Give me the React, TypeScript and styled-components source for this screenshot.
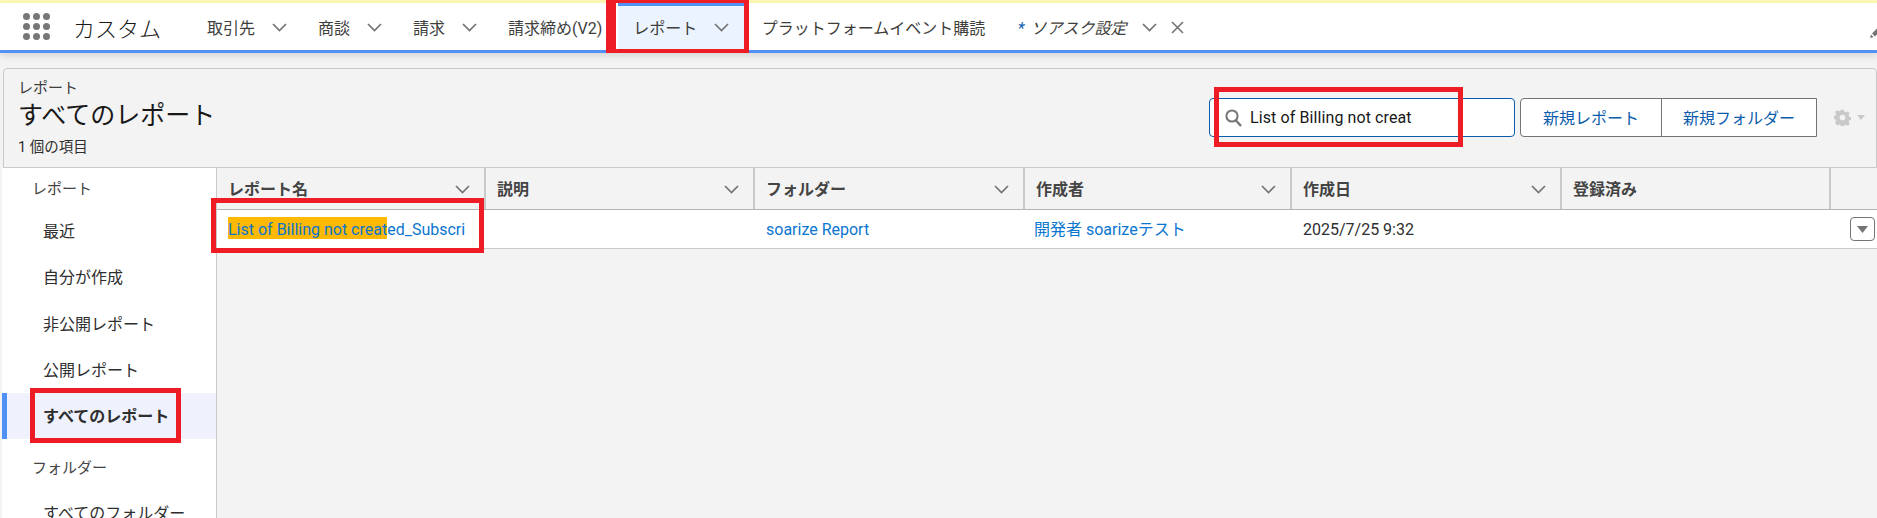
import React from 'react';
import styled, { createGlobalStyle } from 'styled-components';

const GlobalStyle = createGlobalStyle`
    html, body {
        margin: 0;
        padding: 0;
        background: #f3f3f3;
    }
    body {
        font-family: Roboto, "Noto Sans CJK JP", sans-serif;
        color: #2e2e2e;
    }
`

const Page = styled.div`
    position: relative;
    width: 1877px;
    height: 518px;
    overflow: hidden;
    background: #f3f3f3;
`

const Banner = styled.div`
    height: 3px;
    background: #fdf8b4;
`

const Nav = styled.nav`
    position: relative;
    display: flex;
    align-items: stretch;
    height: 47px;
    padding-left: 23px;
    background: #fff;
    border-bottom: 3px solid #5191f5;
    box-shadow: 0 3px 7px rgba(0, 0, 0, 0.12);
`

const Launcher = styled.div`
    display: grid;
    grid-template-columns: repeat(3, 7px);
    grid-auto-rows: 7px;
    gap: 3px;
    align-self: center;
    margin-right: 23px;
`

const Dot = styled.span`
    border-radius: 50%;
    background: #777;
`

const AppName = styled.div`
    display: flex;
    align-items: center;
    width: 118.5px;
    font-size: 22px;
    font-weight: 300;
    color: #181818;
`

const Tab = styled.div<{ $active?: boolean; $gap?: number; $extraLeft?: number }>`
    display: flex;
    align-items: center;
    gap: ${p => p.$gap ?? 17}px;
    height: 100%;
    padding: 0 15.5px 2px ${p => 15.5 + (p.$extraLeft ?? 0)}px;
    box-sizing: border-box;
    font-size: 16px;
    color: #3e3e3c;
    background: ${p => (p.$active ? '#ebf3fe' : 'transparent')};
    border-top: 3px solid ${p => (p.$active ? '#5191f5' : 'transparent')};
    white-space: nowrap;
`

const ItalicLabel = styled.span`
    font-style: italic;
`

const Star = styled.span`
    margin-right: 6px;
    color: #0b5cab;
`

const PencilIcon = styled.svg`
    margin-left: auto;
    align-self: center;
    margin-top: 11px;
    margin-right: -5px;
`

const Content = styled.div`
    padding: 15px 0 0 2px;
`

const Header = styled.header`
    display: flex;
    justify-content: space-between;
    height: 100px;
    box-sizing: border-box;
    padding: 0 11px 0 14px;
    margin-left: 1px;
    border: 1px solid #c9c9c9;
    border-radius: 4px 4px 0 0;
`

const TitleBlock = styled.div`
    display: flex;
    flex-direction: column;
`

const Eyebrow = styled.div`
    margin-top: 9px;
    font-size: 15px;
    line-height: 20px;
    color: #3e3e3c;
`

const Title = styled.h1`
    margin: 1px 0 0;
    font-size: 25px;
    line-height: 34px;
    font-weight: 400;
    color: #181818;
`

const ItemCount = styled.div`
    margin-top: 5px;
    font-size: 14.5px;
    line-height: 20px;
`

const Actions = styled.div`
    display: flex;
    align-items: center;
    margin-top: -1px;
`

const SearchBox = styled.div`
    display: flex;
    align-items: center;
    gap: 8px;
    width: 306px;
    height: 39px;
    box-sizing: border-box;
    padding-left: 15px;
    margin-right: 5px;
    background: #fff;
    border: 1px solid #0b5cab;
    border-radius: 4px;
    font-size: 16px;
    letter-spacing: 0.1px;
    color: #181818;
`

const ButtonGroup = styled.div`
    display: flex;
    height: 39px;
    box-sizing: border-box;
    background: #fff;
    border: 1px solid #747474;
    border-radius: 4px 0 0 4px;
`

const GroupButton = styled.div<{ $width: number; $divided?: boolean }>`
    display: flex;
    align-items: center;
    justify-content: center;
    width: ${p => p.$width}px;
    padding-bottom: 2px;
    box-sizing: content-box;
    font-size: 16px;
    color: #0b5cab;
    border-left: ${p => (p.$divided ? '1px solid #747474' : 'none')};
`

const GearMenu = styled.div`
    display: flex;
    align-items: center;
    gap: 6px;
    margin-left: 17px;
`

const Body = styled.div`
    display: flex;
    height: 350px;
`

const Sidebar = styled.aside`
    width: 214px;
    flex: none;
    background: #fff;
    border-right: 1px solid #c9c9c9;
`

const SideHeading = styled.div<{ $height: number; $pushDown?: number }>`
    display: flex;
    align-items: center;
    height: ${p => p.$height}px;
    box-sizing: border-box;
    padding: ${p => p.$pushDown ?? 0}px 0 2px 30px;
    font-size: 15px;
    color: #444;
`

const SideItem = styled.div<{ $active?: boolean }>`
    display: flex;
    align-items: center;
    height: 46.3px;
    box-sizing: border-box;
    padding: 0 0 2px ${p => (p.$active ? '36px' : '41px')};
    font-size: 16px;
    font-weight: ${p => (p.$active ? 700 : 400)};
    color: #2e2e2e;
    background: ${p => (p.$active ? '#eff2fc' : 'transparent')};
    border-left: ${p => (p.$active ? '5px solid #5191f5' : 'none')};
    white-space: nowrap;
`

const Main = styled.main`
    flex: 1;
    min-width: 0;
`

const ColumnRow = styled.div`
    display: flex;
    height: 41px;
    border-bottom: 1px solid #b4b4b4;
`

const ColumnHead = styled.div<{ $width: number }>`
    display: flex;
    align-items: center;
    justify-content: space-between;
    flex: none;
    width: ${p => p.$width}px;
    box-sizing: border-box;
    padding: 0 14px 2px 11px;
    border-right: 2px solid #c9c9c9;
    font-size: 16px;
    font-weight: 700;
    color: #444;

    svg {
        margin-top: 4px;
    }
`

const DataRow = styled.div`
    display: flex;
    position: relative;
    height: 38px;
    align-items: center;
    background: #fff;
    border-bottom: 1px solid #c9c9c9;
`

const Cell = styled.div<{ $width: number; $indent?: number }>`
    flex: none;
    width: ${p => p.$width}px;
    box-sizing: border-box;
    padding: 2px 0 0 ${p => p.$indent ?? 11}px;
    font-size: 16px;
    line-height: 22px;
    white-space: nowrap;
    overflow: hidden;
`

const CellLink = styled.a`
    color: #0b76d0;
    text-decoration: none;
`

const Highlight = styled.mark`
    padding: 3px 0 0;
    background: #ffb900;
    color: #0b76d0;
`

const RowAction = styled.button`
    display: flex;
    align-items: center;
    justify-content: center;
    width: 25px;
    height: 24px;
    margin-left: 20px;
    padding: 0;
    background: #fff;
    border: 1px solid #747474;
    border-radius: 4px;
`

const RedBox = styled.div<{ $top: number; $left: number; $width: number; $height: number; $sides?: string }>`
    position: absolute;
    top: ${p => p.$top}px;
    left: ${p => p.$left}px;
    width: ${p => p.$width}px;
    height: ${p => p.$height}px;
    box-sizing: border-box;
    border: solid #ee1c25;
    border-width: ${p => p.$sides ?? '5px'};
    pointer-events: none;
`

const Chevron = () => (
    <svg width="15" height="9" viewBox="0 0 15 9" fill="none" style={{ flex: 'none' }}>
        <path d="M1 1l6.5 6.5L14 1" stroke="#747474" strokeWidth="1.7" />
    </svg>
)

const columns = [
    { name: 'レポート名', width: 269, sortable: true },
    { name: '説明', width: 269, sortable: true },
    { name: 'フォルダー', width: 270, sortable: true },
    { name: '作成者', width: 267, sortable: true },
    { name: '作成日', width: 270, sortable: true },
    { name: '登録済み', width: 269, sortable: false },
]

const tabs = [
    { label: '取引先', arrow: true },
    { label: '商談', arrow: true },
    { label: '請求', arrow: true },
    { label: '請求締め(V2)', arrow: false },
]

const reportViews = ['最近', '自分が作成', '非公開レポート', '公開レポート']

export default function App() {
    return (
        <Page>
            <GlobalStyle />
            <Banner />
            <Nav>
                <Launcher>
                    {Array.from({ length: 9 }).map((_, i) => (
                        <Dot key={i} />
                    ))}
                </Launcher>
                <AppName>カスタム</AppName>
                {tabs.map(t => (
                    <Tab key={t.label}>
                        {t.label}
                        {t.arrow && <Chevron />}
                    </Tab>
                ))}
                <Tab $active>
                    レポート
                    <Chevron />
                </Tab>
                <Tab $extraLeft={1.5}>プラットフォームイベント購読</Tab>
                <Tab $gap={15} $extraLeft={1.5}>
                    <ItalicLabel>
                        <Star>*</Star>ソアスク設定
                    </ItalicLabel>
                    <Chevron />
                    <svg width="13" height="13" viewBox="0 0 13 13" fill="none" style={{ marginLeft: -1 }}>
                        <path d="M1 1l11 11M12 1L1 12" stroke="#747474" strokeWidth="1.6" />
                    </svg>
                </Tab>
                <PencilIcon width="12" height="11" viewBox="0 0 12 11">
                    <path d="M0 11l1-3.5 2.5 2.5zM2 6.5L7.5 1l3 3L5 9.5z" fill="#747474" />
                </PencilIcon>
            </Nav>
            <Content>
                <Header>
                    <TitleBlock>
                        <Eyebrow>レポート</Eyebrow>
                        <Title>すべてのレポート</Title>
                        <ItemCount>1 個の項目</ItemCount>
                    </TitleBlock>
                    <Actions>
                        <SearchBox>
                            <svg width="17" height="18" viewBox="0 0 17 18" fill="none">
                                <circle cx="7" cy="7" r="5.6" stroke="#747474" strokeWidth="2" />
                                <path d="M11 11.5l5 5.5" stroke="#747474" strokeWidth="2.4" />
                            </svg>
                            List of Billing not creat
                        </SearchBox>
                        <ButtonGroup>
                            <GroupButton $width={140}>新規レポート</GroupButton>
                            <GroupButton $width={154} $divided>新規フォルダー</GroupButton>
                        </ButtonGroup>
                        <GearMenu>
                            <svg width="17" height="17" viewBox="0 0 24 24" fill="#c9c9c9">
                                <path d="M10 1h4l.6 3 2.2.9 2.6-1.7 2.8 2.8-1.7 2.6.9 2.2 3 .6v4l-3 .6-.9 2.2 1.7 2.6-2.8 2.8-2.6-1.7-2.2.9-.6 3h-4l-.6-3-2.2-.9-2.6 1.7L1.4 19.2l1.7-2.6-.9-2.2-3-.6v-4l3-.6.9-2.2L1.4 4.4 4.2 1.6l2.6 1.7L9 2.4zM12 8a4 4 0 100 8 4 4 0 000-8z" fillRule="evenodd" />
                            </svg>
                            <svg width="8" height="5" viewBox="0 0 8 5">
                                <path d="M0 0h8L4 5z" fill="#c9c9c9" />
                            </svg>
                        </GearMenu>
                    </Actions>
                </Header>
                <Body>
                    <Sidebar>
                        <SideHeading $height={40}>レポート</SideHeading>
                        {reportViews.map(v => (
                            <SideItem key={v}>{v}</SideItem>
                        ))}
                        <SideItem $active>すべてのレポート</SideItem>
                        <SideHeading $height={50} $pushDown={6}>フォルダー</SideHeading>
                        <SideItem>すべてのフォルダー</SideItem>
                    </Sidebar>
                    <Main>
                        <ColumnRow>
                            {columns.map(c => (
                                <ColumnHead key={c.name} $width={c.width}>
                                    {c.name}
                                    {c.sortable && <Chevron />}
                                </ColumnHead>
                            ))}
                        </ColumnRow>
                        <DataRow>
                            <Cell $width={269}>
                                <CellLink>
                                    <Highlight>List of Billing not creat</Highlight>ed_Subscri
                                </CellLink>
                            </Cell>
                            <Cell $width={269} />
                            <Cell $width={270}>
                                <CellLink>soarize Report</CellLink>
                            </Cell>
                            <Cell $width={267} $indent={9}>
                                <CellLink>開発者 soarizeテスト</CellLink>
                            </Cell>
                            <Cell $width={270}>2025/7/25 9:32</Cell>
                            <Cell $width={268} />
                            <RowAction>
                                <svg width="11" height="7" viewBox="0 0 11 7">
                                    <path d="M0 0h11L5.5 7z" fill="#747474" />
                                </svg>
                            </RowAction>
                        </DataRow>
                    </Main>
                </Body>
            </Content>
            <RedBox $top={0} $left={606} $width={143} $height={53} $sides="3px 5px 4px 10px" />
            <RedBox $top={87} $left={1214} $width={249} $height={60} />
            <RedBox $top={198} $left={211} $width={273} $height={55} />
            <RedBox $top={388} $left={30} $width={151} $height={55} />
        </Page>
    );
}
